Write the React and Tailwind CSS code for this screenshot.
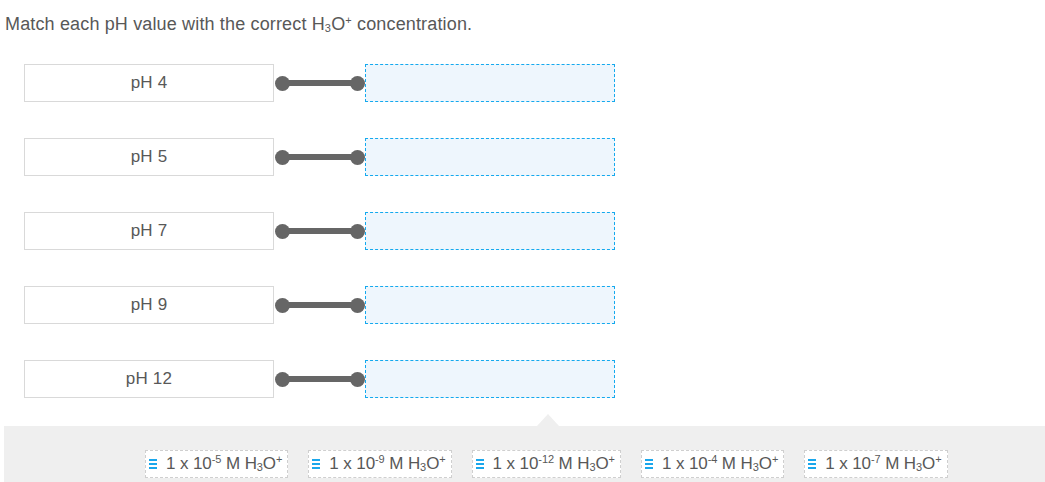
import React from 'react';

const rows = ['pH 4', 'pH 5', 'pH 7', 'pH 9', 'pH 12'];
const answers = ['-5', '-9', '-12', '-4', '-7'];

function H3O() {
  return (
    <span>
      H<sub className="text-[11px] relative top-[2px] align-baseline">3</sub>O
      <sup className="text-[11px] relative -top-[6px] align-baseline">+</sup>
    </span>
  );
}

function Connector() {
  return (
    <div className="relative w-[91px] h-[38px] flex items-center">
      <div className="absolute left-[7px] right-[7px] h-[6px] bg-[#666]" />
      <div className="absolute left-[1px] w-[15px] h-[15px] rounded-full bg-[#666]" />
      <div className="absolute right-0 w-[15px] h-[15px] rounded-full bg-[#666]" />
    </div>
  );
}

function Handle() {
  return (
    <div className="flex flex-col gap-[2px] w-[8px]">
      <div className="h-[2px] bg-[#1aa7ec]" />
      <div className="h-[2px] bg-[#1aa7ec]" />
      <div className="h-[2px] bg-[#1aa7ec]" />
    </div>
  );
}

export default function App() {
  return (
    <div className="w-[1045px] h-[482px] bg-white overflow-hidden text-[#585858] font-['Liberation_Sans',Arial,sans-serif]">
      <p className="pl-[5px] pt-[13px] text-[18px] leading-[22px] tracking-[0.15px]">
        Match each pH value with the correct <H3O /> concentration.
      </p>

      <div className="flex flex-col gap-[36px] pl-[24px] pt-[29px]">
        {rows.map((label) => (
          <div key={label} className="flex items-center">
            <div className="w-[250px] h-[38px] border border-[#d9d9d9] bg-white flex items-center justify-center text-[17px] tracking-[0.2px]">
              {label}
            </div>
            <Connector />
            <div className="w-[250px] h-[38px] border border-dashed border-[#14a9ee] bg-[#eef6fd]" />
          </div>
        ))}
      </div>

      <div className="relative mt-[28px] ml-[4px] h-[60px] bg-[#efefef] flex gap-[20px] pl-[141px] pt-[24px]">
        <div className="absolute -top-[12px] left-[533px] w-0 h-0 border-l-[11px] border-r-[11px] border-b-[12px] border-l-transparent border-r-transparent border-b-[#efefef]" />
        {answers.map((exp) => (
          <div
            key={exp}
            className="h-[28px] flex items-center gap-[9px] pl-[3px] pr-[5px] bg-white border border-dashed border-[#cfcfcf] text-[17px] tracking-[-0.1px] whitespace-nowrap"
          >
            <Handle />
            <span>
              1 x 10<sup className="text-[11px] relative -top-[6px] align-baseline">{exp}</sup> M <H3O />
            </span>
          </div>
        ))}
      </div>
    </div>
  );
}
